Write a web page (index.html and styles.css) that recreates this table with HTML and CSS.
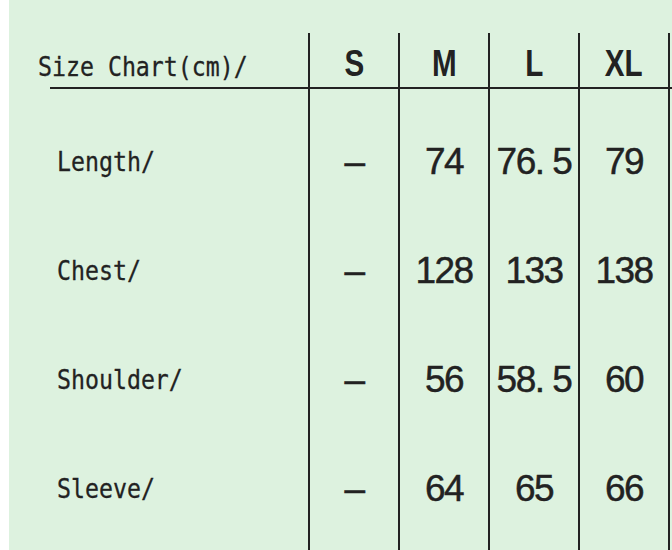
FILE: index.html
```html
<!DOCTYPE html>
<html lang="en">
<head>
<meta charset="utf-8">
<title>Size Chart</title>
<link rel="stylesheet" href="styles.css">
</head>
<body>
<div class="sheet">
  <div class="col col-label">
    <div class="head label-head"><span class="mono">Size Chart(cm)/</span></div>
    <div class="cell label"><span class="mono">Length/</span></div>
    <div class="cell label"><span class="mono">Chest/</span></div>
    <div class="cell label"><span class="mono">Shoulder/</span></div>
    <div class="cell label"><span class="mono">Sleeve/</span></div>
  </div>
  <div class="col col-size">
    <div class="head"><span class="size-name">S</span></div>
    <div class="cell num">–</div>
    <div class="cell num">–</div>
    <div class="cell num">–</div>
    <div class="cell num">–</div>
  </div>
  <div class="col col-size">
    <div class="head"><span class="size-name">M</span></div>
    <div class="cell num">74</div>
    <div class="cell num">128</div>
    <div class="cell num">56</div>
    <div class="cell num">64</div>
  </div>
  <div class="col col-size">
    <div class="head"><span class="size-name">L</span></div>
    <div class="cell num">76. 5</div>
    <div class="cell num">133</div>
    <div class="cell num">58. 5</div>
    <div class="cell num">65</div>
  </div>
  <div class="col col-size col-last">
    <div class="head"><span class="size-name">XL</span></div>
    <div class="cell num">79</div>
    <div class="cell num">138</div>
    <div class="cell num">60</div>
    <div class="cell num">66</div>
  </div>
  <div class="col col-end">
    <div class="head"></div>
  </div>
</div>
</body>
</html>
```
FILE: styles.css
```css
html, body {
  margin: 0;
  padding: 0;
  background: #ffffff;
}

.sheet {
  display: flex;
  margin-left: 9px;
  height: 550px;
  box-sizing: border-box;
  padding-top: 33px;
  background: #ddf2df;
  color: #222222;
  overflow: hidden;
}

.col {
  display: flex;
  flex-direction: column;
  flex-shrink: 0;
}

.col-label {
  width: 299px;
}

.col-size {
  width: 90px;
  box-sizing: border-box;
  border-left: 2px solid #222222;
}

.col-last {
  width: 92px;
  border-right: 2px solid #222222;
}

.col-end {
  flex: 1;
}

.head {
  height: 54px;
  flex-shrink: 0;
  border-bottom: 2px solid #222222;
  display: flex;
  align-items: flex-end;
  justify-content: center;
  box-sizing: content-box;
}

.label-head {
  height: 56px;
  border-bottom: none;
  justify-content: flex-start;
  padding-left: 29px;
  box-sizing: border-box;
  background: linear-gradient(#222222, #222222) no-repeat right bottom / calc(100% - 41px) 2px;
}

.mono {
  display: inline-block;
  font-family: "DejaVu Sans Mono", monospace;
  font-size: 27px;
  line-height: 1;
  white-space: pre;
  transform: scaleX(0.86);
  transform-origin: left center;
  -webkit-text-stroke: 0.3px #222222;
}

.label-head .mono {
  margin-bottom: 9px;
}

.size-name {
  display: inline-block;
  font-family: "Liberation Sans", Arial, sans-serif;
  font-weight: bold;
  font-size: 37px;
  line-height: 1;
  transform: scaleX(0.8);
  margin-bottom: 5px;
}

.cell {
  height: 109px;
  flex-shrink: 0;
  display: flex;
  align-items: center;
  justify-content: center;
}

.head + .cell {
  margin-top: 18px;
}

.label {
  justify-content: flex-start;
  padding-left: 48px;
}

.num {
  font-family: "Liberation Sans", Arial, sans-serif;
  font-size: 37px;
  letter-spacing: -1.5px;
  white-space: pre;
  -webkit-text-stroke: 0.45px #222222;
}
```
